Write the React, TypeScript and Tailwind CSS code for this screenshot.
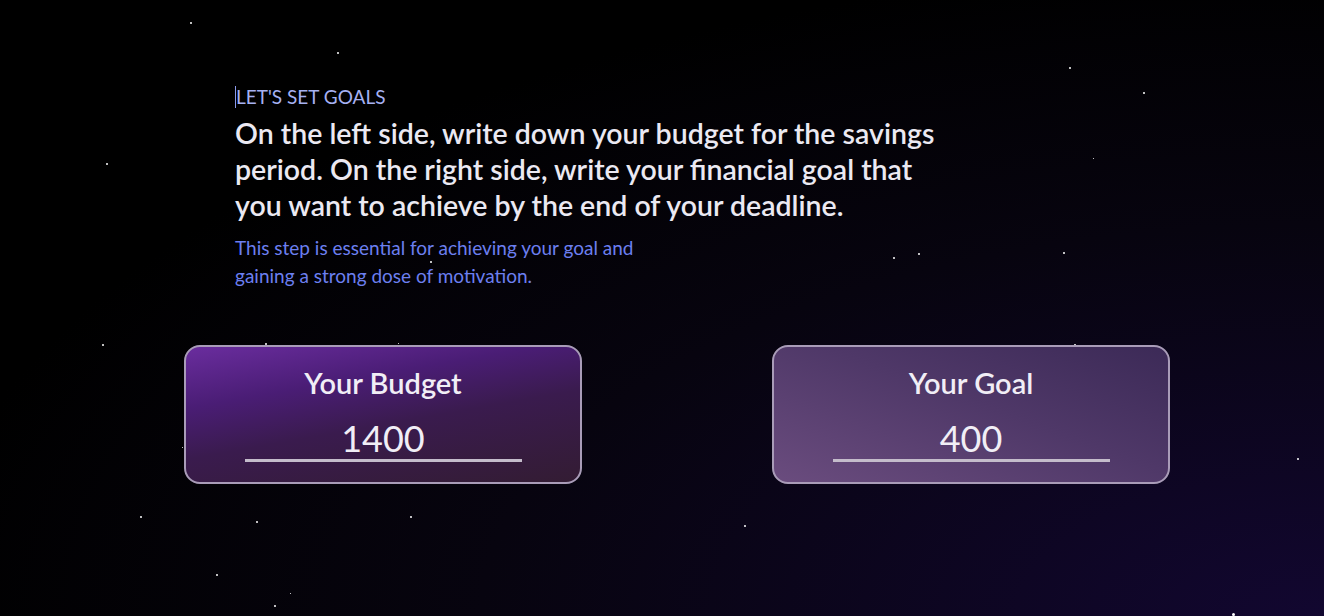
import React from "react"

const stars: [number, number, number][] = [
  [190, 22, 2], [337, 52, 2], [1069, 67, 2], [1143, 92, 2], [106, 163, 2],
  [1093, 158, 1], [918, 253, 2], [893, 257, 2], [1063, 252, 2], [430, 261, 2],
  [102, 344, 2], [265, 343, 2], [398, 343, 1], [1074, 344, 2], [580, 410, 2],
  [422, 418, 1], [573, 428, 1], [187, 449, 2], [1297, 458, 2], [140, 516, 2],
  [256, 521, 2], [410, 516, 2], [744, 525, 2], [216, 574, 2], [274, 605, 2],
  [290, 593, 1], [1232, 613, 3], [182, 447, 1],
]

const GoalCard = ({ title, value, className }: { title: string; value: string; className: string }) => {
  return (
    <div
      className={`w-[398px] h-[139px] rounded-[16px] border-2 border-[#a99cb8] flex flex-col items-center pt-[17px] ${className}`}
    >
      <h3 className="text-[#f1eef6] text-[29px] font-semibold leading-[38px]">{title}</h3>
      <div className="mt-[15px] w-[277px] border-b-[3px] border-[#c4bccb] text-center text-[#f1eef6] text-[36px] leading-[42px]">
        {value}
      </div>
    </div>
  )
}

export default function App() {
  return (
    <div
      className="relative w-full h-[616px] overflow-hidden bg-[radial-gradient(ellipse_at_100%_100%,#120730_0%,#07040f_45%,#000000_75%)]"
      style={{ fontFamily: "Lato, 'Open Sans', sans-serif" }}
    >
      {stars.map(([x, y, s], i) => (
        <span
          key={i}
          className="absolute rounded-full bg-white"
          style={{ left: x, top: y, width: s, height: s }}
        />
      ))}

      <div className="relative pl-[235px] pt-[86px]">
        <p className="text-[#a6b1f2] text-[19px] leading-[22px] border-l border-[#8a98e8]">LET'S SET GOALS</p>
        <h1 className="mt-[7px] w-[722px] text-[#ebe9f2] text-[28.5px] font-semibold leading-[36px]">
          On the left side, write down your budget for the savings period. On the right side, write your
          financial goal that you want to achieve by the end of your deadline.
        </h1>
        <p className="mt-[11px] w-[440px] text-[#6c7ff0] text-[19px] leading-[28px]">
          This step is essential for achieving your goal and gaining a strong dose of motivation.
        </p>
      </div>

      <div className="relative flex gap-[190px] pl-[184px] mt-[55px]">
        <GoalCard
          title="Your Budget"
          value="1400"
          className="bg-[linear-gradient(170deg,#6a2d9e_0%,#4a1d75_30%,#3a1b4e_55%,#331c33_100%)]"
        />
        <GoalCard
          title="Your Goal"
          value="400"
          className="bg-[linear-gradient(200deg,#3c2a57_0%,#4f3868_45%,#6a4c7e_100%)]"
        />
      </div>
    </div>
  )
}
